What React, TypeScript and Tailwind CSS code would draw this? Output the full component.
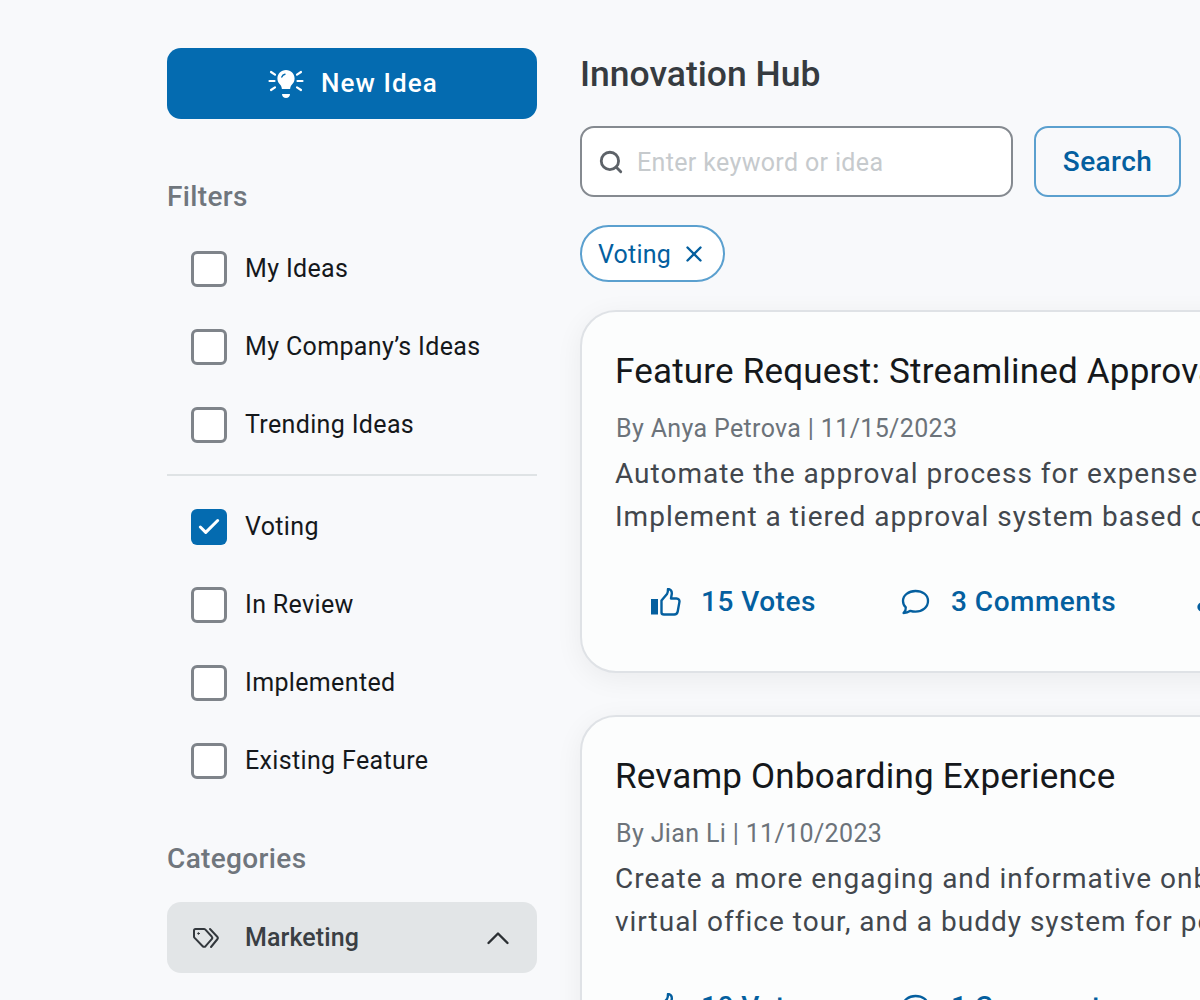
import { Check, Search, X, Share2 } from "lucide-react";

function Bulb() {
  return (
    <svg viewBox="0 0 36 30" className="w-[36px] h-[30px] shrink-0" fill="none">
      <path d="M18 1c-5 0-8.600 3.800-8.600 8.400 0 2.900 1.400 4.700 2.800 6.300.9 1 1.500 2.300 1.700 4.300h8.200c.2-2 .8-3.300 1.700-4.300 1.400-1.600 2.800-3.400 2.800-6.300C26.600 4.800 23 1 18 1Z" fill="white" />
      <path d="M14 25h8c0 2.500-1.800 4-4 4s-4-1.500-4-4Z" fill="white" />
      <path d="M13.800 8c.6-1.600 1.700-2.500 3.200-2.800" stroke="#046bb0" strokeWidth="1.400" strokeLinecap="round" />
      <path d="M1.500 12h5M29.500 12h5M3 3l4 2.600M33 3l-4 2.600M3 21l4-2.600M33 21l-4-2.600" stroke="white" strokeWidth="2.200" strokeLinecap="round" />
    </svg>
  );
}

function Thumb() {
  return (
    <svg viewBox="0 0 30 28" className="w-[30px] h-[28px] shrink-0" fill="none">
      <rect x="0" y="11" width="7" height="15.500" fill="#045f9f" />
      <path d="M10.500 12.500l5.500-6.500c.8-1.200 1-3 1-5 2.800.2 4 2.200 3.800 4.800L20 10.500h5.500c2 0 3.300 1.700 2.900 3.600l-1.700 9.400c-.3 1.700-1.500 3-3.500 3H13c-1.500 0-2.500-.8-2.500-2Z" stroke="#045f9f" strokeWidth="2.400" strokeLinejoin="round" />
    </svg>
  );
}

function Comment() {
  return (
    <svg viewBox="0 0 30 28" className="w-[30px] h-[28px] shrink-0" fill="none">
      <path d="M15.500 3C8.500 3 3 7.400 3 13c0 2.500 1 4.700 2.800 6.400.3 2.200-.7 4-2.300 5.600 3 0 5.200-1 6.900-2.200 1.500.5 3.200.8 5.100.8 7 0 12.500-4.500 12.500-10.600S22.500 3 15.500 3Z" stroke="#045f9f" strokeWidth="2.300" strokeLinejoin="round" />
    </svg>
  );
}

function TagIcon() {
  return (
    <svg viewBox="0 0 28 22" className="w-[28px] h-[22px] shrink-0" fill="none" stroke="#33383d" strokeWidth="2" strokeLinejoin="round" strokeLinecap="round">
      <path d="M3.500 2h8.500a2 2 0 0 1 1.400.6l6.300 6.900a2 2 0 0 1 0 2.700l-6.100 7a2 2 0 0 1-2.900 0L2.400 10.600A2 2 0 0 1 2 9.400V3.500A1.500 1.500 0 0 1 3.500 2Z" />
      <path d="M18 2l7.500 8a1.500 1.500 0 0 1 0 2L19 20" />
      <circle cx="6.500" cy="6.500" r="0.800" fill="#33383d" strokeWidth="1" />
    </svg>
  );
}

function Chevron() {
  return (
    <svg viewBox="0 0 24 14" className="w-[24px] h-[14px] shrink-0" fill="none" stroke="#2b2f33" strokeWidth="2.400" strokeLinecap="round" strokeLinejoin="round">
      <path d="M2.500 12L12 2.500 21.500 12" />
    </svg>
  );
}

function Row({ label, checked }: { label: string; checked?: boolean }) {
  return (
    <div className="flex items-center h-[78px] pl-[24px] gap-[18px]">
      {checked ? (
        <span className="w-[36px] h-[36px] rounded-[6px] bg-[#046bb0] flex items-center justify-center">
          <Check className="w-[26px] h-[26px] text-white" strokeWidth={2.800} />
        </span>
      ) : (
        <span className="w-[36px] h-[36px] rounded-[6px] border-[3px] border-[#7f848a] bg-white" />
      )}
      <span className="text-[25px] tracking-[0.35px] text-[#15181b]">{label}</span>
    </div>
  );
}

function Card({ title, by, l1, l2, votes, comments }: { title: string; by: string; l1: string; l2: string; votes: string; comments: string }) {
  return (
    <div className="w-[900px] h-[363px] shrink-0 rounded-[36px] border-2 border-[#dfe2e6] bg-[#fcfdfd] shadow-[0_6px_28px_rgba(0,0,0,0.06)] px-[34px] pt-[37px] whitespace-nowrap">
      <div className="text-[35px] leading-[46px] tracking-[0.2px] -ml-[1px] text-[#15181b]">{title}</div>
      <div className="mt-[18px] text-[25px] leading-[32px] tracking-[0.35px] text-[#6c737a]">{by}</div>
      <div className="mt-[7px] text-[28px] leading-[43px] tracking-[1px] -ml-[1px] text-[#42474d]">
        <div>{l1}</div>
        <div>{l2}</div>
      </div>
      <div className="mt-[44px] flex items-center text-[#045f9f] text-[28px] font-medium leading-[40px] tracking-[0.5px]">
        <div className="w-[250px] pl-[35px] flex items-center gap-[20px]"><Thumb />{votes}</div>
        <div className="w-[296px] pl-[34px] flex items-center gap-[21px]"><Comment />{comments}</div>
        <Share2 className="w-[28px] h-[28px] ml-[33px] mt-[10px]" fill="currentColor" />
      </div>
    </div>
  );
}

export default function App() {
  return (
    <div className="w-[1200px] h-[1000px] overflow-hidden bg-[#f8f9fb] font-['Roboto',sans-serif] flex pl-[167px] pt-[48px] gap-[43px]">
      <aside className="w-[370px] shrink-0">
        <div className="h-[71px] rounded-[14px] bg-[#046bb0] flex items-center justify-center gap-[17px] text-white text-[26px] font-medium tracking-[1.100px] pl-[2px]">
          <Bulb />New Idea
        </div>
        <div className="mt-[60px] text-[28px] leading-[36px] font-medium tracking-[0.35px] text-[#70767d]">Filters</div>
        <div className="mt-[15px]">
          <Row label="My Ideas" />
          <Row label="My Company’s Ideas" />
          <Row label="Trending Ideas" />
        </div>
        <div className="h-[2px] bg-[#dfe3e5] mt-[10px] mb-[12px]" />
        <Row label="Voting" checked />
        <Row label="In Review" />
        <Row label="Implemented" />
        <Row label="Existing Feature" />
        <div className="mt-[41px] text-[28px] leading-[36px] font-medium tracking-[0.35px] text-[#70767d]">Categories</div>
        <div className="mt-[25px] h-[71px] rounded-[14px] bg-[#e2e5e7] flex items-center pl-[25px] pr-[27px] text-[#3a3f44]">
          <TagIcon />
          <span className="ml-[25px] flex-1 text-[25px] font-medium tracking-[0.1px]">Marketing</span>
          <Chevron />
        </div>
      </aside>
      <main className="flex-1 min-w-0">
        <h1 className="pt-[1px] h-[50px] text-[35.500px] leading-[50px] font-medium text-[#363b40]">Innovation Hub</h1>
        <div className="mt-[28px] flex gap-[21px]">
          <div className="w-[433px] h-[71px] rounded-[14px] border-2 border-[#858a90] bg-white flex items-center pl-[16px] gap-[13px]">
            <Search className="w-[26px] h-[26px] text-[#5d6268]" strokeWidth={2.600} />
            <span className="pt-[2px] text-[25px] tracking-[0.35px] text-[#c6cacd]">Enter keyword or idea</span>
          </div>
          <div className="w-[147px] h-[71px] rounded-[14px] border-2 border-[#5ba0cf] flex items-center justify-center text-[28px] font-medium tracking-[0.4px] text-[#045f9f]">Search</div>
        </div>
        <div className="mt-[28px] w-[145px] h-[57px] rounded-full border-2 border-[#5ba0cf] bg-white flex items-center pl-[16px] pt-[2px] gap-[11px] text-[25px] tracking-[0.2px] text-[#045f9f]">
          Voting
          <X className="w-[26px] h-[26px] -mt-[2px] -ml-[1px]" strokeWidth={2.200} />
        </div>
        <div className="mt-[28px] flex flex-col gap-[42px]">
          <Card title="Feature Request: Streamlined Approval Workflow" by="By Anya Petrova | 11/15/2023" l1="Automate the approval process for expense reports to reduce delays." l2="Implement a tiered approval system based on expense amount." votes="15 Votes" comments="3 Comments" />
          <Card title="Revamp Onboarding Experience" by="By Jian Li | 11/10/2023" l1="Create a more engaging and informative onboarding program with" l2="virtual office tour, and a buddy system for people joining." votes="10 Votes" comments="1 Comment" />
        </div>
      </main>
    </div>
  );
}
